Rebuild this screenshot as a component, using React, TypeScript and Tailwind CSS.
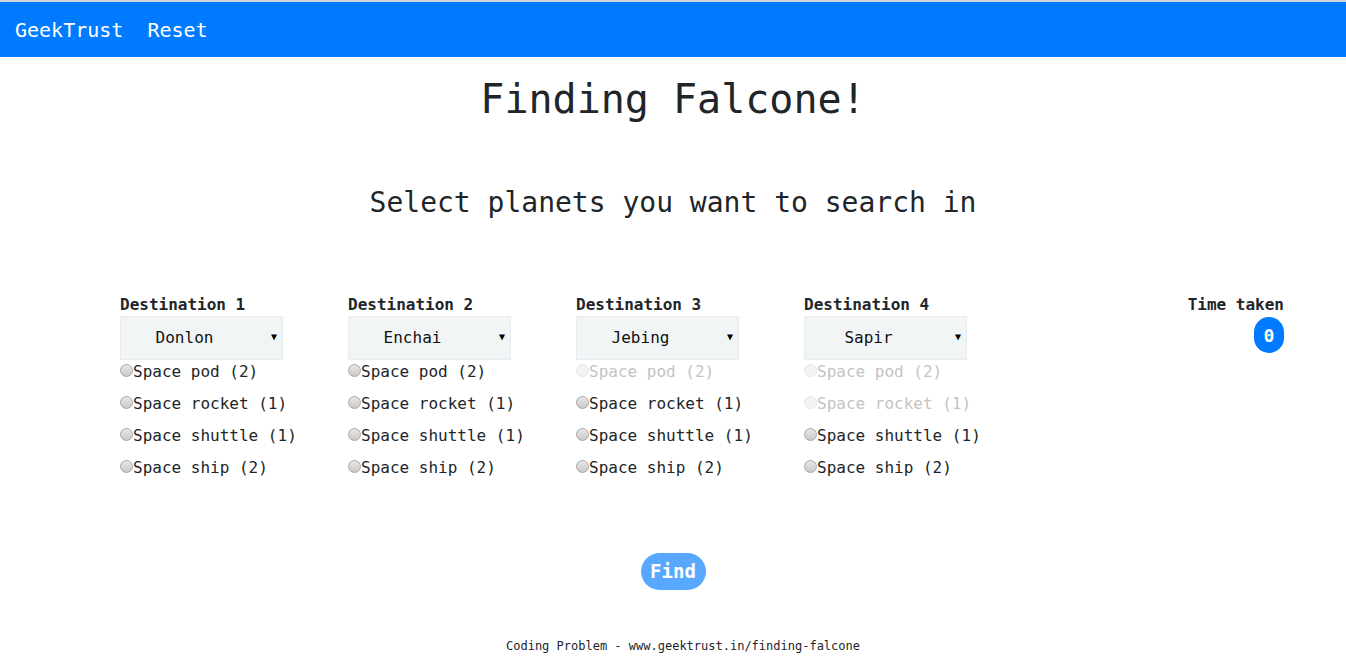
import React, { useState } from 'react';

type Vehicle = {
    name: string;
    count: number;
};

type Destination = {
    label: string;
    planet: string;
    disabled: string[]; // vehicles out of range for this planet
};

const vehicles: Vehicle[] = [
    { name: 'Space pod', count: 2 },
    { name: 'Space rocket', count: 1 },
    { name: 'Space shuttle', count: 1 },
    { name: 'Space ship', count: 2 },
];

const destinations: Destination[] = [
    { label: 'Destination 1', planet: 'Donlon', disabled: [] },
    { label: 'Destination 2', planet: 'Enchai', disabled: [] },
    { label: 'Destination 3', planet: 'Jebing', disabled: ['Space pod'] },
    { label: 'Destination 4', planet: 'Sapir', disabled: ['Space pod', 'Space rocket'] },
];

const mono = { fontFamily: '"DejaVu Sans Mono", "Liberation Mono", monospace' };

const Radio: React.FC<{ disabled: boolean }> = ({ disabled }) => (
    <span
        className={
            disabled
                ? 'inline-block w-[13px] h-[13px] rounded-full border border-[#e6e6e6] bg-[#f3f3f3] -mt-[3px]'
                : 'inline-block w-[13px] h-[13px] rounded-full border border-[#a8a8a8] bg-gradient-to-b from-[#e8e8e8] to-[#c8c8c8] -mt-[3px]'
        }
    />
);

const DestinationColumn: React.FC<{ dest: Destination }> = ({ dest }) => {
    const [planet] = useState(dest.planet);

    return (
        <div className="w-[228px] flex flex-col">
            <div className="text-[16px] leading-[22px] font-bold text-[#212529]">{dest.label}</div>
            <div className="w-[163px] h-[44px] bg-[#f2f5f6] border border-[#e8ecee] flex items-center relative">
                <span className="flex-1 text-center text-[16px] text-[#111] pr-[34px]">{planet}</span>
                <span className="absolute right-[5px] top-[12px] text-[10px] text-black">▼</span>
            </div>
            <div className="flex flex-col">
                {vehicles.map((v) => {
                    const off = dest.disabled.includes(v.name);
                    return (
                        <label key={v.name} className="flex items-center h-[24px] mb-[8px]">
                            <Radio disabled={off} />
                            <span className={off ? 'text-[16px] text-[#c4c4c4]' : 'text-[16px] text-[#212529]'}>
                                {v.name} ({v.count})
                            </span>
                        </label>
                    );
                })}
            </div>
        </div>
    );
};

const App: React.FC = () => {
    return (
        <div className="min-h-[658px] bg-white text-[#212529]" style={mono}>
            {/* Navbar */}
            <nav className="h-[57px] border-t-2 border-[#d0d4d8] bg-[#007bff] flex items-center px-[15px] gap-[24px]">
                <span className="text-[20px] text-white">GeekTrust</span>
                <span className="text-[20px] text-white">Reset</span>
            </nav>

            <h1 className="mt-[18px] text-center text-[40px] leading-[48px] text-[#212529]">Finding Falcone!</h1>
            <h3 className="mt-[63px] text-center text-[28px] leading-[34px] text-[#212529]">
                Select planets you want to search in
            </h3>

            {/* Destinations */}
            <div className="mt-[74px] flex pl-[120px] pr-[62px]">
                {destinations.map((d) => (
                    <DestinationColumn key={d.label} dest={d} />
                ))}
                <div className="ml-auto flex flex-col items-end">
                    <div className="text-[16px] leading-[22px] font-bold">Time taken</div>
                    <span className="mt-[1px] w-[30px] h-[36px] rounded-full bg-[#007bff] text-white font-bold text-[18px] flex items-center justify-center">
                        0
                    </span>
                </div>
            </div>

            <div className="mt-[65px] flex justify-center">
                <button
                    disabled
                    className="h-[37px] w-[65px] rounded-full bg-[#59a8ff] text-white font-bold text-[19px] flex items-center justify-center"
                    style={mono}
                >
                    Find
                </button>
            </div>

            <footer className="mt-[48px] pl-[20px] text-center text-[12px] leading-[16px] text-[#212529]">
                Coding Problem - www.geektrust.in/finding-falcone
            </footer>
        </div>
    );
};

export default App;
